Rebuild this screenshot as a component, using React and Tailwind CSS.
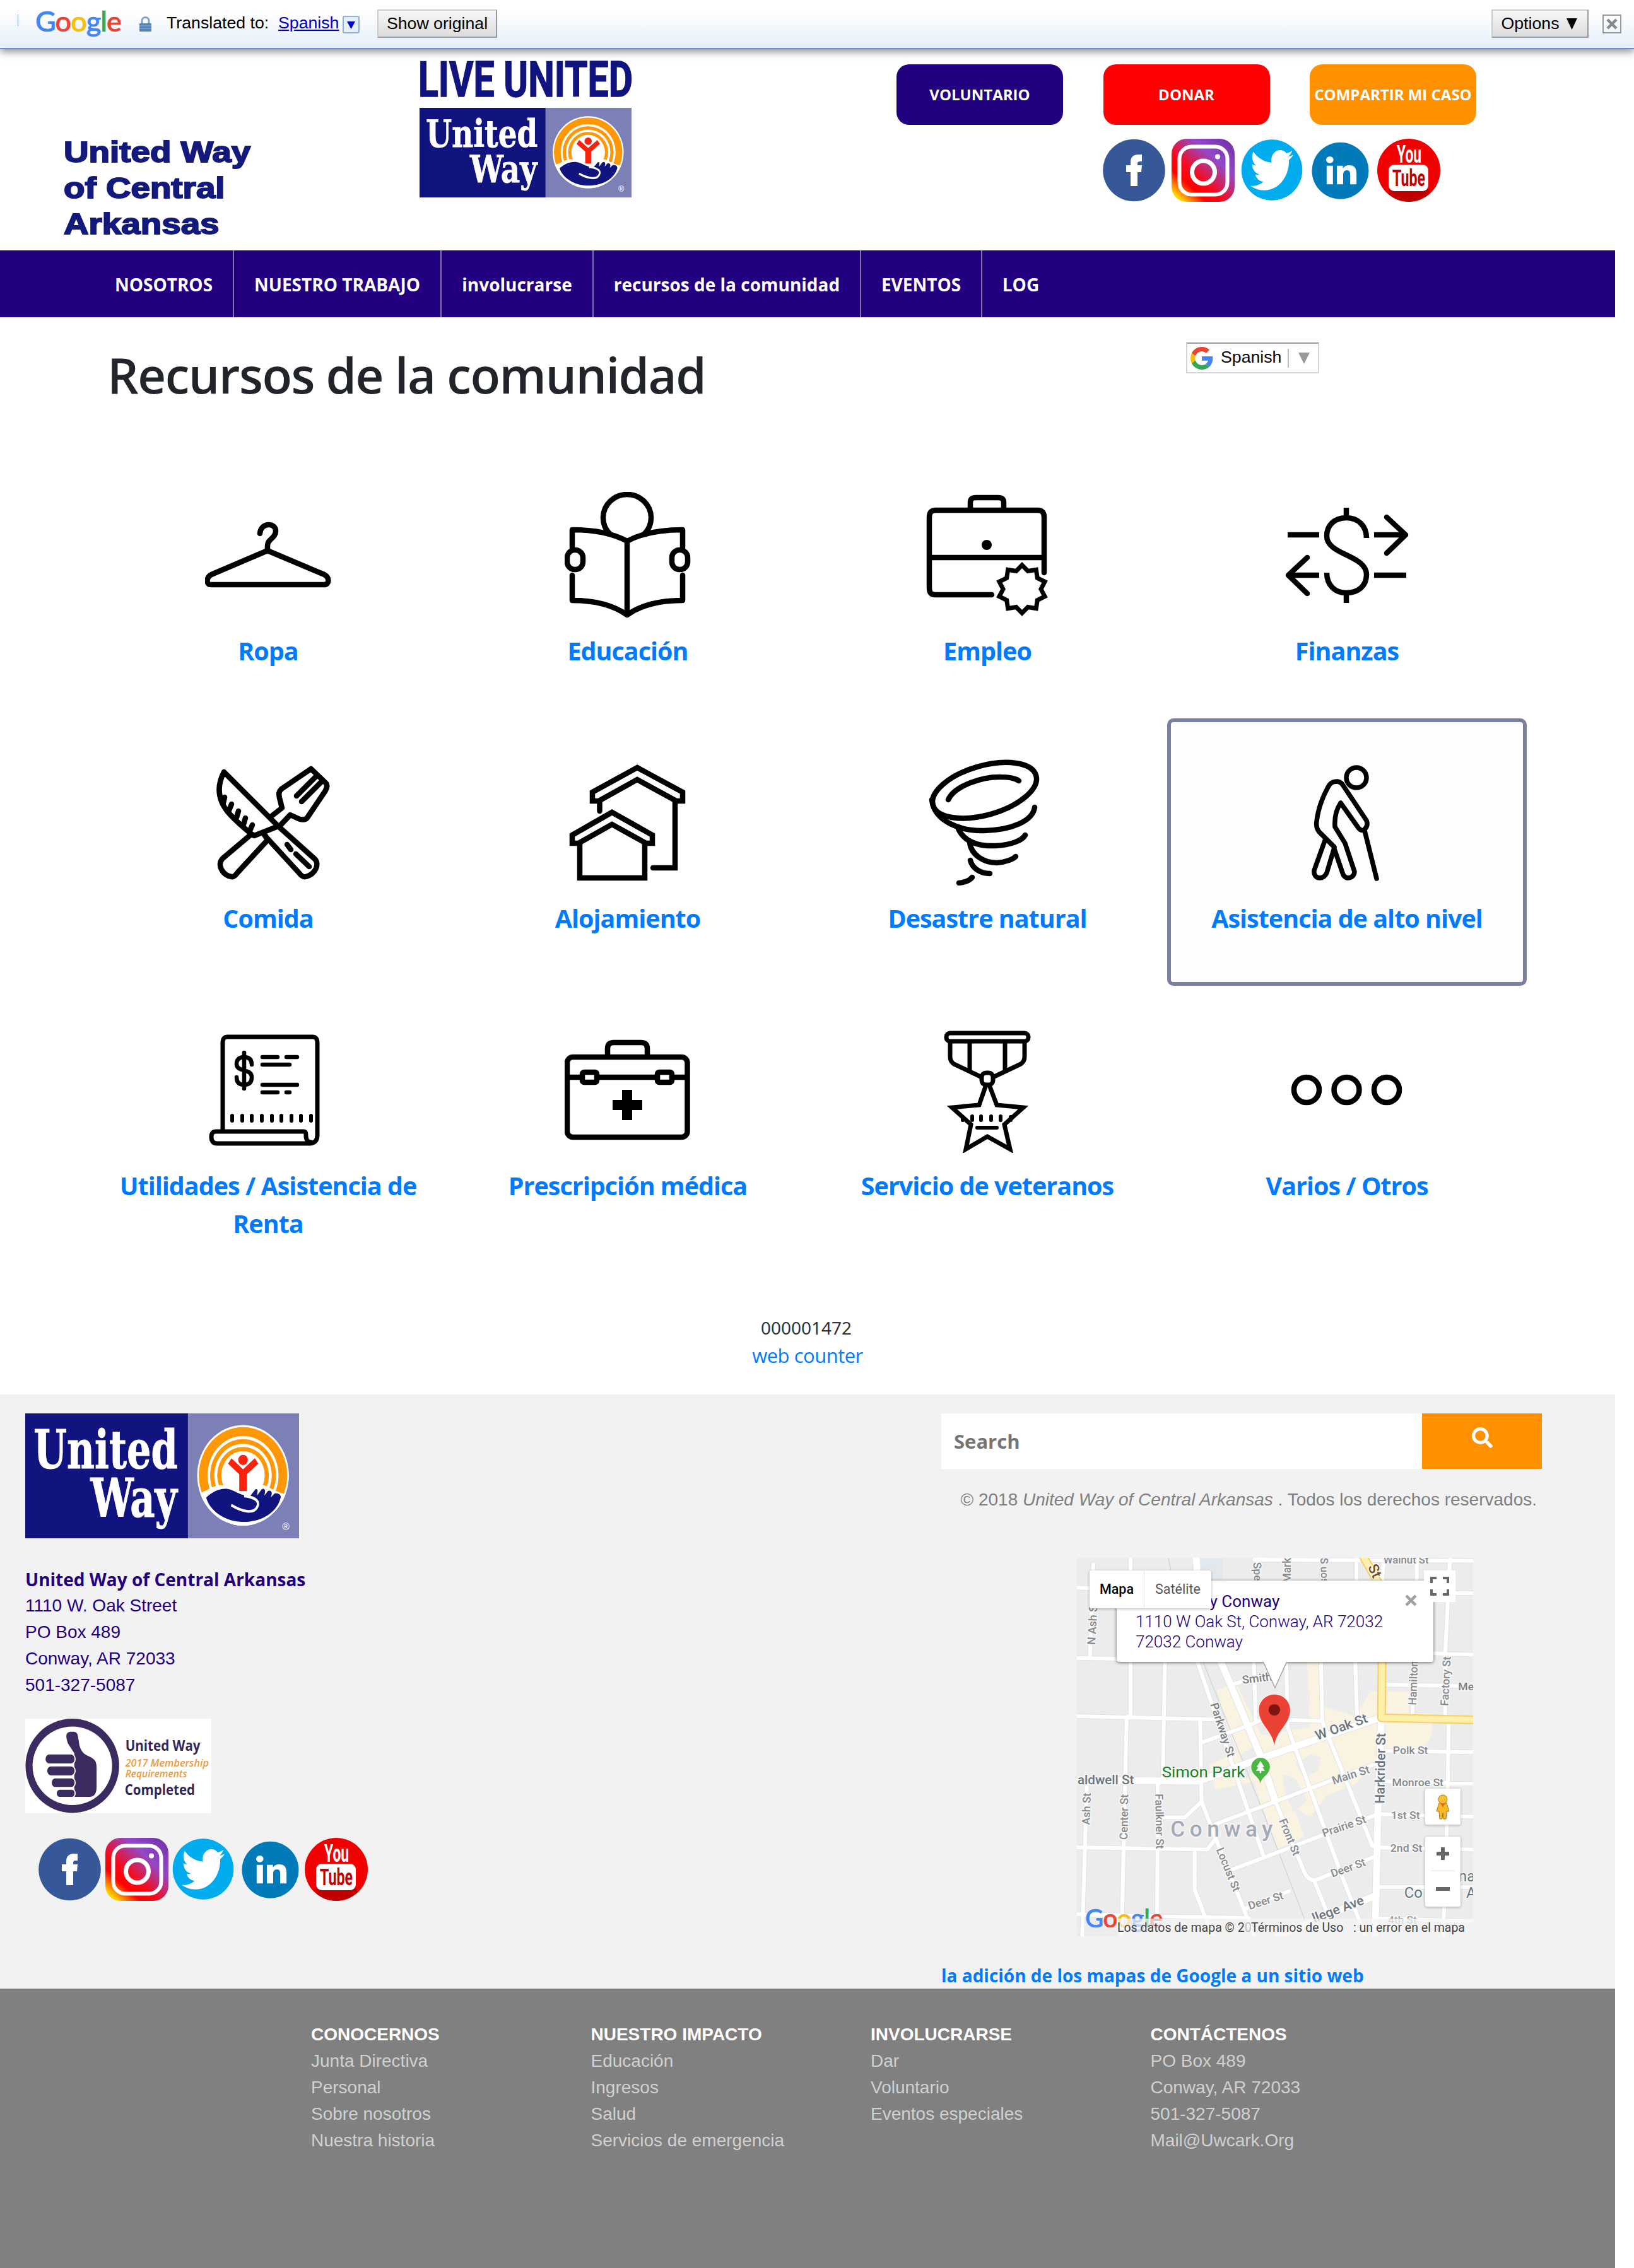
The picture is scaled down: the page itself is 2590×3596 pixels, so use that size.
import React from "react";
import { FaTwitter, FaLinkedinIn, FaSearch } from "react-icons/fa";

const OPEN = "font-['Open_Sans',sans-serif]";
const ARIAL = "font-['Liberation_Sans',sans-serif]";

function GoogleWord({ className }) {
  return (
    <span className={className}>
      <span className="text-[#4285f4]">G</span>
      <span className="text-[#ea4335]">o</span>
      <span className="text-[#fbbc05]">o</span>
      <span className="text-[#4285f4]">g</span>
      <span className="text-[#34a853]">l</span>
      <span className="text-[#ea4335]">e</span>
    </span>
  );
}

function TranslateBar() {
  const button =
    "flex h-[45px] items-center justify-center border-2 border-t-[#ccc] border-l-[#ccc] border-r-[#999] border-b-[#999] bg-linear-to-b from-[#f7f7f7] to-[#dcdcdc]";
  return (
    <div
      className={`${ARIAL} relative z-10 flex h-[78px] w-[2590px] items-start border-b-2 border-[#6b90da] bg-linear-to-b from-white from-25% to-[#e4eefa] text-[26.7px] text-black shadow-[0_4px_12px_rgba(0,0,0,0.45)]`}
    >
      <div className="mt-[23px] ml-[28px] h-[18px] w-px bg-[#6b90da]" />
      <GoogleWord className="mt-[6px] ml-[27px] w-[140px] font-['Lato',sans-serif] text-[45px] leading-[54px] font-medium tracking-[-1px] [-webkit-text-stroke-width:0.7px]" />
      <svg className="mt-[26px] ml-[24px] h-[25px] w-[21px]" viewBox="0 0 21 25">
        <path d="M5 12V7a5.5 5.5 0 0 1 11 0v5" fill="none" stroke="#7ea3cf" strokeWidth="3" />
        <rect x="1" y="11" width="19" height="13" rx="1" fill="#4f81bd" />
        <path d="M1 15h19M1 19h19" stroke="#7ea3cf" strokeWidth="1.4" />
      </svg>
      <span className="mt-[21px] ml-[23px] w-[177px] leading-[30px] whitespace-nowrap">Translated to:</span>
      <span className="mt-[21px] w-[102px] leading-[30px] text-[#0000cc] underline">Spanish</span>
      <span className="mt-[25px] flex h-[28px] w-[27px] items-center justify-center rounded-[3px] border-2 border-[#8fb0d8] bg-[#e6effa]">
        <svg width="13" height="13" viewBox="0 0 13 13">
          <path d="M0 1H13L6.5 13Z" fill="#0000cc" />
        </svg>
      </span>
      <span className={`${button} mt-[15px] ml-[28px] w-[190px]`}>Show original</span>
      <span className={`${button} mt-[15px] ml-auto w-[154px] gap-[12px] pr-[2px]`}>
        Options
        <svg width="17" height="18" viewBox="0 0 17 18">
          <path d="M0 0H17L8.5 18Z" fill="#000" />
        </svg>
      </span>
      <span className="mt-[23px] mr-[20px] ml-[22px] flex h-[30px] w-[30px] items-center justify-center border-2 border-[#999]">
        <svg width="18" height="18" viewBox="0 0 18 18">
          <path d="M2 2L16 16M16 2L2 16" stroke="#888" strokeWidth="4.5" />
        </svg>
      </span>
    </div>
  );
}

function UnitedWayLogo({ className }) {
  return (
    <svg className={className} viewBox="90 76 973 365" preserveAspectRatio="none">
      <defs>
        <clipPath id="uw-disc">
          <ellipse cx="864" cy="257" rx="163" ry="147" />
        </clipPath>
      </defs>
      <rect x="90" y="76" width="973" height="365" fill="#11147e" />
      <rect x="668" y="76" width="395" height="365" fill="#7c80b6" />
      <g fill="#fff" stroke="#fff" strokeWidth="2" fontFamily="'DejaVu Serif', serif" fontWeight="bold" fontSize="154">
        <text x="120" y="236" textLength="512" lengthAdjust="spacingAndGlyphs">United</text>
        <text x="322" y="379" textLength="308" lengthAdjust="spacingAndGlyphs">Way</text>
      </g>
      <g clipPath="url(#uw-disc)">
        <rect x="690" y="100" width="350" height="310" fill="#fff" />
        <ellipse cx="864" cy="257" rx="157" ry="141" fill="#ff9808" />
        <ellipse cx="864" cy="257" rx="126" ry="115" fill="#fff" />
        <ellipse cx="864" cy="257" rx="117" ry="106" fill="#ff9808" />
        <ellipse cx="864" cy="257" rx="102" ry="92" fill="#fff" />
        <ellipse cx="864" cy="257" rx="92" ry="83" fill="#ff9808" />
        <ellipse cx="864" cy="257" rx="77" ry="71" fill="#fff" />
        <path d="M690 318L735 300C760 288 780 284 790 286L940 286C960 292 985 310 1040 316V410H690Z" fill="#fff" />
        <path
          d="M733 322C755 304 785 293 812 297C836 301 850 314 880 317L888 319L906 300C912 294 918 299 915 307L914 316L930 298C938 293 944 299 942 307L940 316L952 303C960 300 967 304 966 312L963 321L976 310C988 308 998 312 998 321C985 366 930 393 865 393C800 393 745 360 733 322Z"
          fill="#11147e"
        />
        <path d="M868 317C912 322 924 334 914 350C902 370 862 364 822 344" fill="none" stroke="#fff" strokeWidth="8" />
      </g>
      <ellipse cx="864" cy="212" rx="17" ry="15" fill="#f8220e" />
      <path d="M817 215L864 252L912 215" fill="none" stroke="#f8220e" strokeWidth="20" />
      <path d="M864 246V303" stroke="#f8220e" strokeWidth="27" />
      <text x="1003" y="417" fill="#fff" fontFamily="'Liberation Sans', sans-serif" fontSize="32" textLength="26" lengthAdjust="spacingAndGlyphs">®</text>
    </svg>
  );
}

function SocialIcons({ className }) {
  const box = "h-[100px] w-[100px]";
  return (
    <div className={className}>
      <svg className={box} viewBox="0 0 100 100">
        <circle cx="49.5" cy="50" r="49.3" fill="#365899" />
        <path d="M44 75V53H37V42H44V37C44 29 49 25 56 25H62V36H59C56 36 55 37.500 55 40V42H62L61 53H55V75Z" fill="#fff" />
      </svg>
      <svg className={box} viewBox="0 0 100 100">
        <defs>
          <linearGradient id="ig" x1="0.02" y1="0.98" x2="0.9" y2="0.02">
            <stop offset="0" stopColor="#ffdd00" />
            <stop offset="0.08" stopColor="#ffd000" />
            <stop offset="0.27" stopColor="#ff0000" />
            <stop offset="0.42" stopColor="#f50b1c" />
            <stop offset="0.72" stopColor="#9248c8" />
            <stop offset="1" stopColor="#7434a8" />
          </linearGradient>
        </defs>
        <rect width="100" height="100" rx="24" fill="url(#ig)" />
        <rect x="12.5" y="12.5" width="76" height="76" rx="19" fill="none" stroke="#fff" strokeWidth="6" />
        <circle cx="50.5" cy="53" r="18" fill="none" stroke="#fff" strokeWidth="7" />
        <circle cx="73" cy="28.5" r="4" fill="#fff" />
      </svg>
      <svg className={box} viewBox="0 0 100 100">
        <circle cx="50" cy="49.5" r="48.3" fill="#00acee" />
        <g transform="translate(16 10.5) scale(0.68 0.787)" color="#fff">
          <FaTwitter size={100} />
        </g>
      </svg>
      <svg className={box} viewBox="0 0 100 100">
        <circle cx="50.5" cy="50.7" r="45" fill="#007ab9" />
        <g transform="translate(24.6 28) scale(1 0.92)" color="#fff">
          <FaLinkedinIn size={55} />
        </g>
      </svg>
      <svg className={box} viewBox="0 0 100 100">
        <circle cx="50" cy="50" r="50" fill="#f00000" />
        <path d="M18 80H81L84 86.5A50 50 0 0 1 18 88Z" fill="#c00000" />
        <rect x="18" y="41" width="63" height="42" rx="9" fill="#fff" />
        <g fontFamily="Roboto, sans-serif" fontWeight="bold">
          <text x="31" y="38" fill="#fff" fontSize="38" textLength="39" lengthAdjust="spacingAndGlyphs">You</text>
          <text x="24" y="75" fill="#c00000" fontSize="36" textLength="52" lengthAdjust="spacingAndGlyphs">Tube</text>
        </g>
      </svg>
    </div>
  );
}

function Header() {
  const cta = "flex h-[96px] w-[264px] items-center justify-center rounded-[20px] whitespace-nowrap";
  return (
    <header className="flex h-[319px] w-[2560px]">
      <h2 className={`${ARIAL} mt-[134px] ml-[101px] w-[564px] origin-left scale-x-[1.165] text-[47px] leading-[57px] font-bold text-[#14197c] [-webkit-text-stroke:2px_#14197c]`}>
        United Way
        <br />
        of Central
        <br />
        Arkansas
      </h2>
      <div className="flex w-[756px] flex-col">
        <svg className="mt-[8px] h-[75px] w-[338px] overflow-visible" viewBox="0 0 338 75">
          <text x="-2" y="67" fill="#11147e" stroke="#11147e" strokeWidth="1.5" fontFamily="Roboto, sans-serif" fontWeight="bold" fontSize="78" textLength="340" lengthAdjust="spacingAndGlyphs">LIVE UNITED</text>
        </svg>
        <UnitedWayLogo className="mt-[10px] h-[142px] w-[336px]" />
      </div>
      <div className={`${OPEN} flex flex-col text-[24px] font-bold text-white`}>
        <div className="mt-[24px] flex gap-[63.5px]">
          <a className={`${cta} bg-[#230080]`}>VOLUNTARIO</a>
          <a className={`${cta} bg-[#ff0000]`}>DONAR</a>
          <a className={`${cta} bg-[#ff9000]`}>COMPARTIR MI CASO</a>
        </div>
        <SocialIcons className="mt-[22px] ml-[327px] flex gap-[8.75px]" />
      </div>
    </header>
  );
}

function Nav() {
  const item = "flex h-full items-center justify-center border-r-2 border-[#7b78a8] pt-px whitespace-nowrap";
  return (
    <nav className={`${OPEN} flex h-[106px] w-[2560px] bg-[#230080] pl-[150px] text-[28px] font-bold text-white`}>
      <a className={`${item} w-[221px]`}>NOSOTROS</a>
      <a className={`${item} w-[329px]`}>NUESTRO TRABAJO</a>
      <a className={`${item} w-[241px]`}>involucrarse</a>
      <a className={`${item} w-[424px]`}>recursos de la comunidad</a>
      <a className={`${item} w-[192px]`}>EVENTOS</a>
      <a className="flex h-full w-[122px] items-center justify-center pt-px">LOG</a>
    </nav>
  );
}

const starPoints = Array.from({ length: 20 }, (_, i) => {
  const r = i % 2 ? 30 : 38;
  const a = (i * Math.PI) / 10;
  return `${(155 + r * Math.sin(a)).toFixed(1)},${(154 - r * Math.cos(a)).toFixed(1)}`;
}).join(" ");

const ICONS = {
  hanger: (
    <path d="M99 94V85C99 74 112 74 112 62C112 48 88 48 87 66M99 93L10 131C1 136 2 147 9 147H189C197 147 198 136 189 131Z" />
  ),
  reader: (
    <>
      <path d="M71 66A38 37 0 1 1 127 66" />
      <path d="M12 88V60C45 60 75 65 99 78C123 65 153 60 187 60V88M12 132V172C45 172 75 178 99 195C123 178 153 172 187 172V132M99 78V195" />
      <rect x="4" y="92" width="25" height="31" rx="12" />
      <rect x="170" y="92" width="25" height="31" rx="12" />
    </>
  ),
  briefcase: (
    <>
      <path d="M73 26V17C73 11 76 9 82 9H117C123 9 126 11 126 17V26" />
      <path d="M107 163H17C10 163 8 159 8 152V40C8 33 11 29 18 29H180C187 29 190 33 190 40V128M8 104H190" />
      <circle cx="99" cy="84" r="8" fill="#000" stroke="none" />
      <polygon points={starPoints} strokeWidth="7" strokeLinejoin="miter" />
    </>
  ),
  finance: (
    <>
      <path strokeLinecap="butt" d="M99 25V41M99 160V176M131 73C131 54 118 41 99 41C81 41 68 52 68 70C68 100 131 100 131 131C131 149 118 160 99 160C81 160 68 148 68 128M56 68H6M143 68H192M56 132H8M143 132H194" />
      <path d="M163 40L193 68L163 97M37 104L7 132L37 161" />
    </>
  ),
  food: (
    <>
      <path d="M30 20L116 106M78 121L116 106M30 20C17 45 22 65 35 82C48 98 62 108 75 120M78 121L73 118M29 69L31 60M38 81L42 71M50 92L53 82M61 103L64 93M71 113L75 104" />
      <path d="M116 106L174 158C182 166 175 182 160 186C156 187 152 184 149 180L94 120" />
      <path d="M73 119L28 157C18 167 28 184 42 186C46 187 49 183 52 179L99 128L95 120M104 91L122 77L118 61C117 55 116 52 121 47L168 15L192 38C195 43 192 47 190 51L163 91C160 97 152 96 148 94L135 88L118 106M175 28L145 58M184 36L153 67" />
      <path d="M130 135L136 143M144 150L165 170" />
    </>
  ),
  houses: (
    <>
      <path strokeLinejoin="miter" d="M115 13L187 52V66H177L115 32L54 66H44V52ZM75 84L139 120V133H129L75 103L22 133H12V120Z" />
      <path strokeLinejoin="miter" d="M55.5 66V82M175 66V172H140M24 133V188H127V133" />
    </>
  ),
  tornado: (
    <>
      <ellipse cx="95.5" cy="49" rx="85" ry="39" transform="rotate(-16 96 49)" />
      <path d="M38 64C48 42 92 27 122 28C134 28 144 30 150 34M12 64C16 100 60 114 95 113C138 112 172 98 175 76M54 110C64 132 88 138 113 137C138 136 156 128 160 120M72 131C74 152 95 164 115 164C130 163 141 158 145 154M73 160C76 172 88 181 104 181M76 187C72 192 64 195 55 196" />
    </>
  ),
  elder: (
    <>
      <circle cx="115" cy="29" r="16" strokeWidth="7.5" />
      <path strokeWidth="7.5" d="M80 139L56 115C52 110 51 104 52 98C54 82 60 62 70 44C74 36 79 35 85 35C90 36 92 38 95 43L131 97C133 102 132 107 128 111C124 114 120 112 117 107L90 69C84 78 80 92 81 107L97 133L112 178C112 184 107 188 102 188C97 188 94 184 93 180L79 139M66 126L48 176C47 183 51 188 57 188C63 188 66 184 68 180L79 143M128 113L147 189" />
    </>
  ),
  receipt: (
    <>
      <path strokeWidth="7" d="M28 163V26C28 19 30 16 36 16H170C176 16 178 19 178 26V172C178 181 173 185 166 185H19C12 185 10 180 10 175C10 169 12 166 18 166H156C160 166 160 169 160 173C160 179 163 183 168 183" />
      <path strokeWidth="6.5" d="M62 41V98M74 60C74 51 69 48 62 48C54 48 50 52 50 59C50 73 74 65 74 80C74 89 69 92 62 92C54 92 50 88 50 80M91 48H115M129 48H146M91 60H134M91 92H146M91 104H115M129 104H134" />
      <path strokeWidth="6" d="M43 141V149M59 141V149M74 141V149M90 141V149M106 141V149M121 141V149M137 141V149M152 141V149M168 141V149" />
    </>
  ),
  medkit: (
    <>
      <path d="M68 47V35C68 28 71 25 78 25H121C128 25 131 28 131 35V47" />
      <rect x="4" y="48" width="190.5" height="127" rx="9" />
      <path d="M4 80H28M51 80H147M170 80H194" />
      <rect x="28" y="72" width="23" height="16" rx="3" />
      <rect x="147" y="72" width="23" height="16" rx="3" />
      <path strokeLinecap="butt" strokeWidth="16" d="M99 100V148M76 124H123" />
    </>
  ),
  medal: (
    <g strokeWidth="7">
      <rect x="35" y="10" width="130" height="13" rx="6" />
      <path d="M41 25V48C41 53 43 56 47 59L89 79M159 25V48C159 53 157 56 153 59L111 79M72 25V69M128 25V69" />
      <rect x="91" y="73" width="18" height="19" rx="7" />
      <path strokeLinejoin="miter" d="M97 95L87 124L44 128L74 155L66 194L100 174L136 194L127 155L157 128L115 124L104 95" />
      <path strokeWidth="6" d="M61 143V148M76 142V148M90 142V148M106 142V148M121 142V148M137 143V148M84 160H115" />
    </g>
  ),
  dots: (
    <>
      <circle cx="36" cy="100" r="20" />
      <circle cx="99.5" cy="100" r="20" />
      <circle cx="163" cy="100" r="20" />
    </>
  ),
};

const RESOURCES = [
  ["hanger", "Ropa"],
  ["reader", "Educación"],
  ["briefcase", "Empleo"],
  ["finance", "Finanzas"],
  ["food", "Comida"],
  ["houses", "Alojamiento"],
  ["tornado", "Desastre natural"],
  ["elder", "Asistencia de alto nivel"],
  ["receipt", "Utilidades / Asistencia de Renta"],
  ["medkit", "Prescripción médica"],
  ["medal", "Servicio de veteranos"],
  ["dots", "Varios / Otros"],
];

function Resources() {
  return (
    <main className="h-[1708px] w-[2560px]">
      <div className="flex h-[212px]">
        <h1 className={`${OPEN} mt-[36px] ml-[170px] w-[1710px] text-[78px] leading-[110px] font-semibold tracking-[-1.55px] text-[#212529]`}>
          Recursos de la comunidad
        </h1>
        <div className={`${ARIAL} mt-[40px] flex h-[49px] w-[211px] items-center border-2 border-[#d5d5d5] border-t-[#9b9b9b] text-[26.7px] text-black`}>
          <svg className="ml-[5px] h-[38px] w-[36px] shrink-0" viewBox="0 0 48 48">
            <path fill="#ea4335" d="M24 9.5c3.5 0 6.7 1.2 9.2 3.6l6.9-6.9C35.9 2.4 30.5 0 24 0 14.6 0 6.5 5.4 2.6 13.2l8 6.2C12.4 13.7 17.7 9.5 24 9.5z" />
            <path fill="#4285f4" d="M47 24.6c0-1.6-.2-3.1-.4-4.6H24v9h12.900c-.6 3-2.200 5.500-4.700 7.200l7.700 6C44.400 38 47 31.800 47 24.600z" />
            <path fill="#fbbc05" d="M10.5 28.6c-.5-1.5-.8-3-.8-4.6s.3-3.1.8-4.6l-8-6.2C.9 16.5 0 20.1 0 24s.9 7.5 2.6 10.8z" />
            <path fill="#34a853" d="M24 48c6.5 0 11.9-2.1 15.9-5.8l-7.7-6c-2.2 1.4-4.9 2.3-8.2 2.3-6.3 0-11.6-4.2-13.5-9.9l-8 6.2C6.5 42.6 14.6 48 24 48z" />
          </svg>
          <span className="mb-[2px] ml-[12px]">Spanish</span>
          <span className="ml-[10px] h-[30px] w-[2px] bg-[#bbb]" />
          <svg className="ml-[15px]" width="18" height="18" viewBox="0 0 18 18">
            <path d="M0 0H18L9 18Z" fill="#999" />
          </svg>
        </div>
      </div>
      <div className="ml-[140px] grid w-[2280px] grid-cols-4">
        {RESOURCES.map(([icon, label]) => (
          <a
            key={icon}
            className={`${OPEN} flex h-[424px] flex-col items-center rounded-[10px] border-[6px] px-[24px] pt-[59px] text-center text-[39.5px] leading-[60px] font-bold tracking-[-1px] text-[#007bff] ${
              icon === "elder" ? "border-[#7b80a0] bg-[#fdfdfd]" : "border-transparent"
            }`}
          >
            <svg
              className="mb-[22px] h-[200px] w-[200px] shrink-0"
              viewBox="0 0 200 200"
              fill="none"
              stroke="#000"
              strokeWidth="8.5"
              strokeLinecap="round"
              strokeLinejoin="round"
            >
              {ICONS[icon]}
            </svg>
            {label}
          </a>
        ))}
      </div>
      <div className="mt-[98px] flex flex-col items-center">
        <span className="mr-[4px] font-['Noto_Sans',sans-serif] text-[28px] leading-[40px] text-[#333]">000001472</span>
        <a className={`${OPEN} mt-[2px] text-[31px] leading-[44px] tracking-[-0.5px] text-[#007bff]`}>web counter</a>
      </div>
    </main>
  );
}

function MembershipBadge() {
  return (
    <svg className="mt-[32px] h-[150px] w-[295px] bg-white" viewBox="90 968 660 277" preserveAspectRatio="none">
      <ellipse cx="257" cy="1106" rx="166" ry="138" fill="#3b2b60" />
      <ellipse cx="257" cy="1106" rx="141" ry="115" fill="#fff" />
      <g fill="#3b2b60" stroke="#fff" strokeWidth="4">
        <path d="M262 1199V1070L240 1042C228 1015 233 1004 258 1004C283 1005 278 1020 284 1045C290 1065 302 1072 320 1078C340 1086 345 1094 345 1112V1168C345 1190 336 1199 318 1199Z" />
        <rect x="160" y="1071" width="107" height="30" rx="15" />
        <rect x="166" y="1106" width="101" height="30" rx="15" />
        <rect x="182" y="1141" width="85" height="29" rx="14" />
        <rect x="200" y="1174" width="67" height="25" rx="12" />
      </g>
      <g fontFamily="'Open Sans', sans-serif" fontWeight="bold" fill="#33275a" fontSize="44">
        <text x="445" y="1063" textLength="266" lengthAdjust="spacingAndGlyphs">United Way</text>
        <text x="443" y="1192" textLength="249" lengthAdjust="spacingAndGlyphs">Completed</text>
      </g>
      <g fontFamily="'Open Sans', sans-serif" fontStyle="italic" fontWeight="600" fill="#eb9a3c" fontSize="31">
        <text x="445" y="1108" textLength="296" lengthAdjust="spacingAndGlyphs">2017 Membership</text>
        <text x="445" y="1140" textLength="219" lengthAdjust="spacingAndGlyphs">Requirements</text>
      </g>
    </svg>
  );
}

const MINOR_ROADS =
  "M120 95L108 437M254 71V645L240 655L222 1455M97 895L80 1455M378 450L370 880L352 900L350 1380M61 180L115 183M61 437L210 440M61 650L560 662M61 1130L530 1138L560 1100M61 1375L680 1388M505 668L510 962L560 1095L675 1390L700 1455M508 965L450 1020H360M485 1140V1285L550 1455M515 745L690 680L730 660L945 668M495 450L735 1168M698 450L705 660M815 450L820 690L1010 1220L1100 1455M940 450L945 670L1125 1125M1063 440L1070 650M560 1045L1135 825M610 1215L1140 1010M880 1220Q895 1252 920 1250L1130 1165M775 960L880 1220M915 1250L975 1400M620 535L760 490M665 1355L825 1290M1172 777L1488 782M1172 888L1488 897M1150 1008L1488 1018M1140 1130L1488 1138M1150 1275L1488 1275M1150 1390L1488 1400M1405 71L1387 430V650M1400 670L1395 1000L1380 1455M1270 440V640M1172 535L1488 540M700 78L1488 82M1390 200H1488M1340 420L1488 425M1068 71V155M1285 71V155M1165 90L1160 155M708 78V155M820 71V155";
const MAJOR_ROADS = "M490 71L497 155M575 440L720 790L775 960M190 885L500 888L720 805L1155 655M1158 640L1145 1000L1135 1455M780 1455L1140 1305";

const LABELS = [
  ["Walnut St", 1165, 92, 0, 38, "#878a8d"],
  ["Spe", 696, 88, 87, 40, "#878a8d"],
  ["Markh", 832, 162, -90, 40, "#878a8d"],
  ["S uos", 938, 71, 88, 38, "#878a8d"],
  ["Smith", 658, 532, -7, 41, "#7b7e82"],
  ["N Ash St", 127, 390, -87, 41, "#878a8d"],
  ["Hamilton", 1283, 610, -88, 40, "#878a8d"],
  ["Factory St", 1398, 613, -87, 40, "#878a8d"],
  ["Me", 1434, 556, 0, 40, "#7b7e82"],
  ["Parkway St", 541, 607, 72, 41, "#7b7e82"],
  ["W Oak St", 927, 738, -20, 48, "#6b747c"],
  ["Harkrider St", 1168, 970, -89, 48, "#6b747c"],
  ["Polk St", 1199, 788, 0, 40, "#878a8d"],
  ["Monroe St", 1196, 905, 0, 40, "#878a8d"],
  ["Main St", 985, 900, -18, 41, "#878a8d"],
  ["Prairie St", 950, 1092, -19, 40, "#878a8d"],
  ["1st St", 1192, 1025, 0, 40, "#878a8d"],
  ["2nd St", 1190, 1146, 0, 40, "#878a8d"],
  ["4th St", 1182, 1409, 0, 39, "#9c9ea1"],
  ["Deer St", 981, 1240, -20, 40, "#878a8d"],
  ["Deer St", 683, 1358, -18, 40, "#878a8d"],
  ["Locust St", 562, 1138, 68, 40, "#878a8d"],
  ["Front St", 788, 1032, 68, 40, "#878a8d"],
  ["Ash St", 107, 1048, -88, 40, "#878a8d"],
  ["Center St", 243, 1102, -89, 40, "#878a8d"],
  ["Faulkner St", 343, 934, 89, 40, "#878a8d"],
  ["aldwell St", 63, 900, 0, 47, "#6b747c"],
  ["llege Ave", 916, 1406, -21, 48, "#6b747c"],
];

function MapCanvas() {
  return (
    <svg className="absolute inset-0 h-full w-full" viewBox="61 71 1427 1384" preserveAspectRatio="none">
      <rect x="61" y="71" width="1427" height="1384" fill="#ececec" />
      <rect x="505" y="71" width="82" height="85" fill="#e3e8ec" />
      <path
        fill="#fbf3e2"
        d="M565 555L635 530L725 720L900 690L890 450L935 450V610L1060 650L1120 560H1258V640H1340V690C1340 740 1320 760 1280 770L1160 780L1130 830L1060 900L960 940L900 1020L840 980L880 1090L785 1135L720 960L700 890L560 918L535 830L640 780L600 680Z"
      />
      <path
        fill="#ececec"
        d="M850 820L905 790L940 800L930 850L890 870L860 850ZM800 860L850 880L890 960L840 1000L810 930ZM860 560H900V610H860ZM650 790L700 760L720 830L670 880Z"
      />
      <path fill="none" stroke="#d0d3d6" strokeWidth="3" d="M390 71L400 118M515 450L735 1010L905 1455" />
      <g fill="none" strokeLinejoin="round" strokeLinecap="round">
        <path d={MINOR_ROADS} stroke="#e0e0e0" strokeWidth="18" />
        <path d={MAJOR_ROADS} stroke="#e0e0e0" strokeWidth="29" />
        <path d={MINOR_ROADS} stroke="#fff" strokeWidth="14" />
        <path d={MAJOR_ROADS} stroke="#fff" strokeWidth="25" />
        <path d="M1095 71L1162 190L1158 656L1495 664" stroke="#f7cf6e" strokeWidth="32" />
        <path d="M1095 71L1162 190L1158 656L1495 664" stroke="#fff0a9" strokeWidth="22" />
      </g>
      <g fontFamily="Roboto, sans-serif" stroke="#f6f6f6" strokeWidth="8" paintOrder="stroke" strokeLinejoin="round" fontWeight="500">
        {LABELS.map(([text, x, y, angle, size, color], i) => (
          <text key={i} transform={`translate(${x} ${y}) rotate(${angle})`} fontSize={size} fill={color}>
            {text}
          </text>
        ))}
        <text transform="translate(1108 104) rotate(65)" fontSize="52" fill="#7a4a10">St</text>
        <text x="367" y="873" fontSize="56" fontWeight="400" fill="#1b8027" textLength="299" lengthAdjust="spacingAndGlyphs">Simon Park</text>
        <text x="398" y="1091" fontSize="80" fill="#a3a9b5" letterSpacing="17">Conway</text>
        <text x="1240" y="1314" fontSize="54" fontWeight="400" fill="#5f7782">Co</text>
        <text x="1436" y="1254" fontSize="54" fontWeight="400" fill="#5f7782">na</text>
        <text x="1463" y="1314" fontSize="54" fontWeight="400" fill="#5f7782">A</text>
      </g>
      <path d="M722 896C718 870 689 865 689 836A33.5 33.5 0 0 1 756 836C756 865 726 870 722 896Z" fill="#4cb643" />
      <path d="M722 814L736 836H729L738 850H725V858H719V850H706L715 836H708Z" fill="#fff" />
      <path d="M772 760C768 705 716 682 716 627A56.5 56.5 0 0 1 829 627C829 682 776 705 772 760Z" fill="#ea4335" stroke="#fff" strokeWidth="5" paintOrder="stroke" />
      <circle cx="772" cy="627" r="21" fill="#811411" />
    </svg>
  );
}

function CityMap() {
  return (
    <div className="relative h-[600px] w-[628px] overflow-hidden font-['Roboto',sans-serif]">
      <MapCanvas />
      <div className="absolute top-[36px] left-[63px] h-[129px] w-[502px] rounded-[4px] bg-white pt-[17px] pl-[30px] text-[26px] leading-[32px] font-light whitespace-nowrap text-[#230080] shadow-[0_1px_5px_rgba(0,0,0,0.6)]">
        <p className="font-normal">United Way Conway</p>
        <p>1110 W Oak St, Conway, AR 72032</p>
        <p>72032 Conway</p>
      </div>
      <svg className="absolute top-[163px] left-[290px] h-[50px] w-[50px]" viewBox="0 0 50 50">
        <path d="M5 1L24 43L43 1" fill="#fff" stroke="#a5a5a5" strokeWidth="1.5" />
        <path d="M3 0H46V2H3Z" fill="#fff" />
      </svg>
      <svg className="absolute top-[58px] left-[520px] h-[19px] w-[19px]" viewBox="0 0 19 19">
        <path d="M2 2L17 17M17 2L2 17" stroke="#a0a0a0" strokeWidth="4.5" />
      </svg>
      <div className="absolute top-[20px] left-[20px] flex h-[60px] w-[193px] rounded-[3px] bg-white text-[21.5px] shadow-[0_1px_4px_rgba(0,0,0,0.3)]">
        <span className="flex w-[87px] items-center justify-center border-r border-[#e6e6e6] font-medium text-black">Mapa</span>
        <span className="flex flex-1 items-center justify-center text-[#565656]">Satélite</span>
      </div>
      <div className="absolute top-[20px] left-[550px] flex h-[50px] w-[50px] items-center justify-center bg-white">
        <svg width="30" height="30" viewBox="0 0 30 30">
          <path d="M2 10V2H10M20 2H28V10M28 20V28H20M10 28H2V20" fill="none" stroke="#666" strokeWidth="4" />
        </svg>
      </div>
      <div className="absolute top-[366px] left-[552px] flex h-[57px] w-[56px] items-center justify-center rounded-[3px] bg-white shadow-[0_1px_4px_rgba(0,0,0,0.3)]">
        <svg width="24" height="40" viewBox="0 0 24 40">
          <path d="M6 14L2 27H6L7 39H11L12 29L13 39H17L18 27H22L18 14Z" fill="#fbb72a" stroke="#a87412" strokeWidth="1" />
          <path d="M8 14L12 21L16 14Z" fill="#e8711c" />
          <circle cx="12" cy="8" r="7" fill="#fbc02d" stroke="#a87412" strokeWidth="1" />
        </svg>
      </div>
      <div className="absolute top-[442px] left-[552px] flex h-[111px] w-[56px] flex-col items-center rounded-[3px] bg-white shadow-[0_1px_4px_rgba(0,0,0,0.3)]">
        <svg className="mt-[16px]" width="22" height="22" viewBox="0 0 22 22">
          <path d="M11 1V21M1 11H21" stroke="#666" strokeWidth="6" />
        </svg>
        <div className="mt-[16px] h-px w-[37px] bg-[#ddd]" />
        <svg className="mt-[17px]" width="22" height="22" viewBox="0 0 22 22">
          <path d="M0 11H22" stroke="#666" strokeWidth="6" />
        </svg>
      </div>
      <GoogleWord className="absolute top-[547px] left-[13px] font-['Lato',sans-serif] text-[40px] leading-[48px] font-medium tracking-[-0.5px] [-webkit-text-stroke-width:0.7px]" />
      <div className="absolute top-[572px] left-[64px] flex h-[28px] w-[564px] bg-[#f5f5f5]/70 text-[19.5px] leading-[30px] whitespace-nowrap text-[#444]">
        <span className="w-[212px] overflow-hidden">
          Los datos de mapa © 2<span className="text-[#bbb]">018</span>
        </span>
        <span className="w-[162px]">Términos de Uso</span>
        <span>: un error en el mapa</span>
      </div>
    </div>
  );
}

function ContactSection() {
  return (
    <section className="flex h-[942px] w-[2560px] bg-[#f2f2f2]">
      <div className={`${ARIAL} flex w-[1492px] flex-col pl-[40px] text-[28px] leading-[42px] text-[#230080]`}>
        <UnitedWayLogo className="mt-[30px] h-[198px] w-[434px]" />
        <p className={`${OPEN} mt-[45px] leading-[41px] font-bold`}>United Way of Central Arkansas</p>
        <p>1110 W. Oak Street</p>
        <p>PO Box 489</p>
        <p>Conway, AR 72033</p>
        <p>501-327-5087</p>
        <MembershipBadge />
        <SocialIcons className="mt-[39px] ml-[21px] flex gap-[5.5px]" />
      </div>
      <div className="flex w-[952px] flex-col">
        <div className={`${OPEN} mt-[30px] flex h-[89px] text-[31px] font-bold`}>
          <div className="flex w-[762px] items-center bg-white pl-[20px] text-[#757575]">Search</div>
          <div className="flex w-[190px] justify-center bg-[#ff9000] pt-[22px] text-white">
            <FaSearch size={33} />
          </div>
        </div>
        <p className={`${ARIAL} mt-[28px] mr-[8px] self-end text-[28px] leading-[42px] whitespace-nowrap text-[#808080]`}>
          © 2018 <i>United Way of Central Arkansas</i> . Todos los derechos reservados.
        </p>
        <div className="mt-[71px] ml-[215px]">
          <CityMap />
        </div>
        <a className={`${OPEN} mt-[41px] text-[28px] leading-[42px] font-bold whitespace-nowrap text-[#007bff]`}>
          la adición de los mapas de Google a un sitio web
        </a>
      </div>
    </section>
  );
}

const FOOTER = [
  ["CONOCERNOS", "Junta Directiva", "Personal", "Sobre nosotros", "Nuestra historia"],
  ["NUESTRO IMPACTO", "Educación", "Ingresos", "Salud", "Servicios de emergencia"],
  ["INVOLUCRARSE", "Dar", "Voluntario", "Eventos especiales"],
  ["CONTÁCTENOS", "PO Box 489", "Conway, AR 72033", "501-327-5087", "Mail@Uwcark.Org"],
];

function Footer() {
  return (
    <footer className={`${ARIAL} grid h-[443px] w-[2560px] grid-cols-[443.5px_443.5px_443.5px_443.5px] bg-[#808080] pt-[52px] pl-[493px] text-[28px] leading-[42px] text-[#d0d0d0]`}>
      {FOOTER.map(([title, ...items]) => (
        <div key={title} className="flex flex-col whitespace-nowrap">
          <b className="text-white">{title}</b>
          {items.map((item) => (
            <span key={item}>{item}</span>
          ))}
        </div>
      ))}
    </footer>
  );
}

export default function App() {
  return (
    <div className="h-[3596px] w-[2590px] overflow-hidden bg-white">
      <TranslateBar />
      <Header />
      <Nav />
      <Resources />
      <ContactSection />
      <Footer />
    </div>
  );
}
